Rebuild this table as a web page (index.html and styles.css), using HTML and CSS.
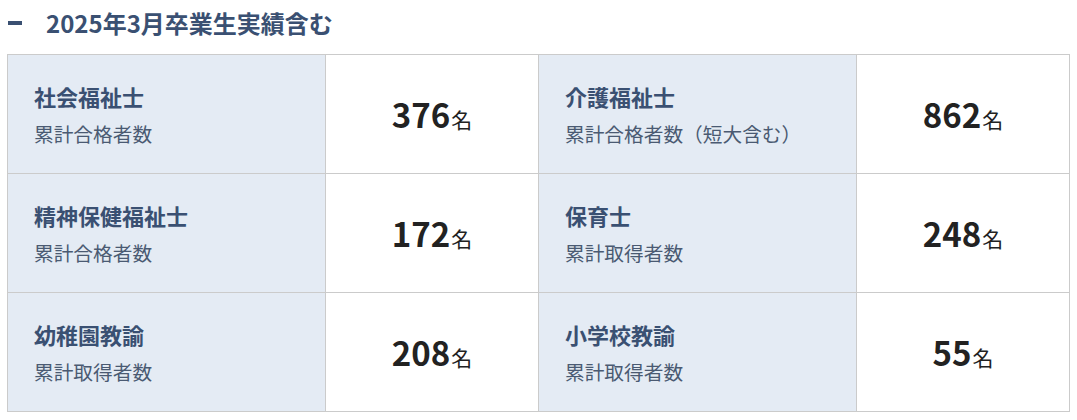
FILE: index.html
```html
<!DOCTYPE html>
<html lang="ja">
<head>
<meta charset="utf-8">
<link rel="stylesheet" href="styles.css">
</head>
<body>
<section class="results">
  <h2 class="heading"><span class="dash"></span>2025年3月卒業生実績含む</h2>
  <table class="table">
    <colgroup>
      <col class="c-label"><col class="c-num"><col class="c-label"><col class="c-num">
    </colgroup>
    <tr>
      <th><div class="title">社会福祉士</div><div class="sub">累計合格者数</div></th>
      <td><span class="num">376</span><span class="unit">名</span></td>
      <th><div class="title">介護福祉士</div><div class="sub">累計合格者数（短大含む）</div></th>
      <td><span class="num">862</span><span class="unit">名</span></td>
    </tr>
    <tr>
      <th><div class="title">精神保健福祉士</div><div class="sub">累計合格者数</div></th>
      <td><span class="num">172</span><span class="unit">名</span></td>
      <th><div class="title">保育士</div><div class="sub">累計取得者数</div></th>
      <td><span class="num">248</span><span class="unit">名</span></td>
    </tr>
    <tr>
      <th><div class="title">幼稚園教諭</div><div class="sub">累計取得者数</div></th>
      <td><span class="num">208</span><span class="unit">名</span></td>
      <th><div class="title">小学校教諭</div><div class="sub">累計取得者数</div></th>
      <td><span class="num">55</span><span class="unit">名</span></td>
    </tr>
  </table>
</section>
</body>
</html>
```

FILE: styles.css
```css
html, body {
  margin: 0;
  padding: 0;
  background: #fff;
}
body {
  font-family: "Noto Sans CJK JP", "Noto Sans", sans-serif;
  color: #222;
}
.results {
  padding: 0 0 0 7px;
  width: 1063px;
}
.heading {
  display: flex;
  align-items: center;
  margin: 0;
  height: 44px;
  font-size: 24px;
  font-weight: 700;
  color: #3a5072;
  line-height: 1;
  padding-top: 1px;
  box-sizing: border-box;
}
.dash {
  display: block;
  width: 14px;
  height: 4px;
  background: #3a5072;
  margin: 0 24px 0 1px;
}
.table {
  margin-top: 10px;
  width: 1063px;
  border-collapse: collapse;
  table-layout: fixed;
}
.c-label { width: 318px; }
.c-num { width: 213px; }
.table th, .table td {
  border: 1px solid #cbcbcb;
  height: 119px;
  padding: 0;
  box-sizing: border-box;
  vertical-align: middle;
}
.table th {
  background: #e4ebf4;
  text-align: left;
  padding-left: 26px;
  font-weight: 400;
}
.title {
  font-size: 22px;
  font-weight: 700;
  color: #3a5072;
  line-height: 30px;
  margin-bottom: 9px;
}
.sub {
  font-size: 19.7px;
  color: #4a5a72;
  line-height: 28px;
}
.table td {
  text-align: center;
  background: #fff;
}
.num {
  font-size: 33px;
  font-weight: 700;
  color: #222;
}
.unit {
  font-size: 21px;
  color: #222;
  margin-left: 1px;
}
```
